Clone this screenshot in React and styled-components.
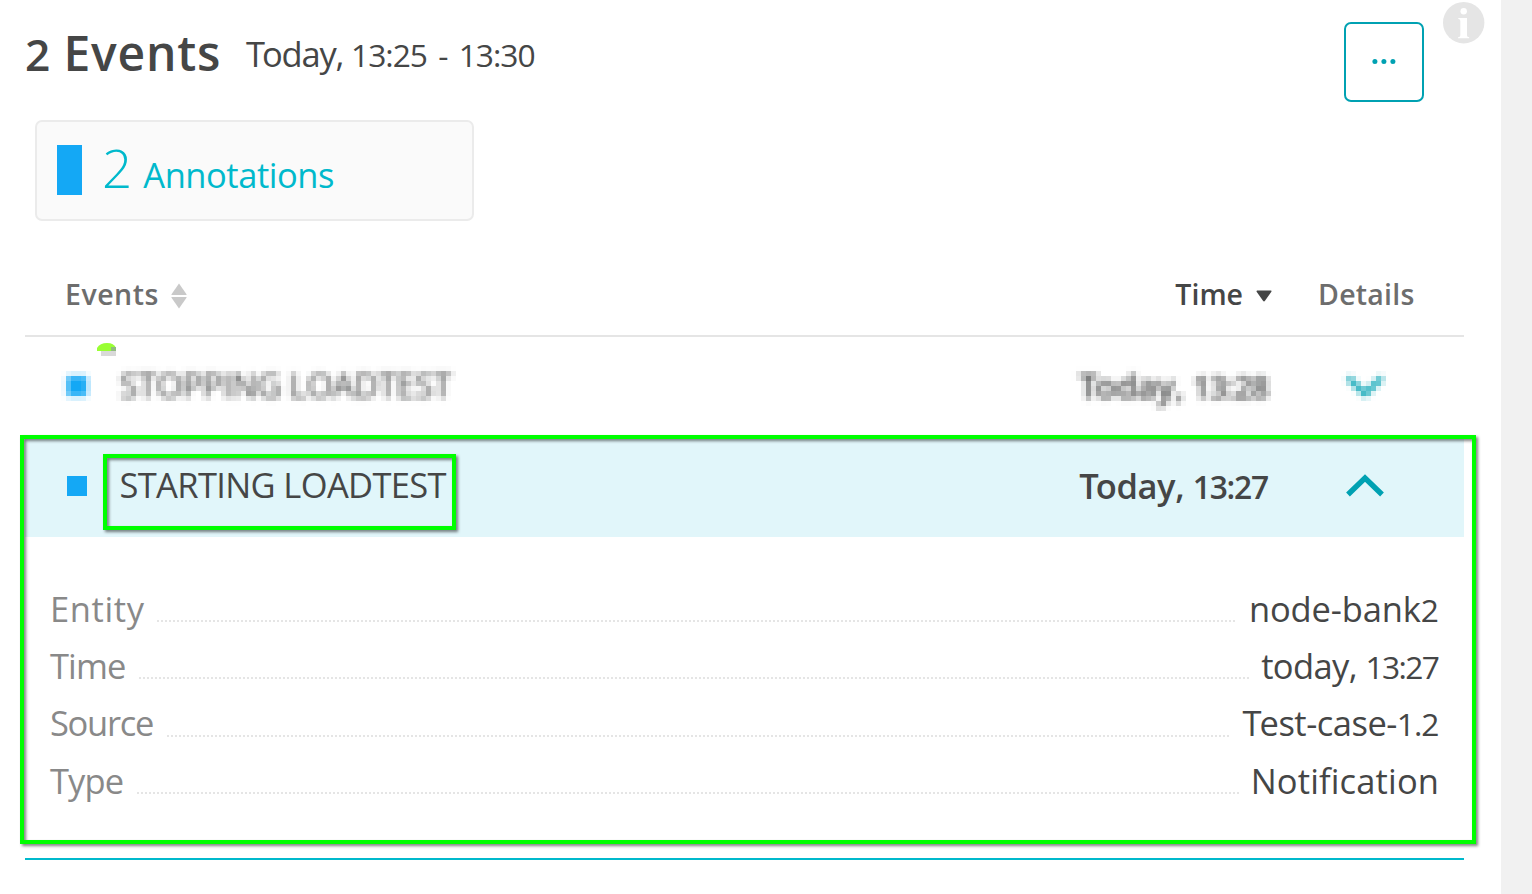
import React from "react";
import styled, { createGlobalStyle } from "styled-components";

const GlobalStyle = createGlobalStyle`
  * { box-sizing: border-box; }
  body { margin: 0; background: #fff; overflow: hidden; }
`;

const Page = styled.div`
  display: flex;
  height: 894px;
  font-family: "Open Sans", "Noto Sans", sans-serif;
  color: #454646;
  white-space: nowrap;
`;

const Panel = styled.main`
  position: relative;
  width: 1501px;
  padding: 18px 37px 0 25px;
  background: #fff;
`;

const Gutter = styled.aside`
  flex: 1;
  background: #f1f1f1;
`;

const Header = styled.header`
  display: flex;
  align-items: flex-start;
  height: 102px;
`;

const Title = styled.h1`
  margin: 0;
  width: 221px;
  font-size: 48px;
  font-weight: 600;
  line-height: 69px;
  letter-spacing: 0.8px;
`;

const Text = styled.span`
  font-size: ${(p) => p.$size || 34.5}px;
  font-weight: ${(p) => p.$weight || 400};
  letter-spacing: ${(p) => p.$track || 0}px;
  margin-right: ${(p) => -(p.$track || 0)}px;
`;

/* Figures are set slightly smaller than the capitals. */
const Num = styled.span`
  font-size: 0.92em;
  letter-spacing: ${(p) => p.$track || 0}px;
  word-spacing: 4px;
`;

const Kern = styled.span`
  letter-spacing: ${(p) => p.$by}px;
`;

const Timeframe = styled(Text)`
  flex: 1;
  line-height: 72px;
`;

const MenuButton = styled.button`
  display: grid;
  place-items: center;
  width: 80px;
  height: 80px;
  margin: 4px 40px 0 0;
  padding: 0 1px 1px 0;
  border: 2px solid #00a1b2;
  border-radius: 7px;
  background: #fff;
`;

const InfoBadge = styled.svg`
  position: absolute;
  left: 1443px;
  top: 2px;
`;

const Card = styled.section`
  display: flex;
  align-items: flex-start;
  width: 439px;
  height: 101px;
  margin-left: 10px;
  padding: 23px 20px;
  border: 2px solid #ebebeb;
  border-radius: 7px;
  background: #fafafa;
  color: #00b9cc;
`;

const Bar = styled.i`
  width: 25px;
  height: 50px;
  margin-right: 20px;
  background: #14a8f5;
`;

const CardText = styled.div`
  display: flex;
  align-items: baseline;
  gap: 11px;
  line-height: 45px;
`;

const columns = `
  display: grid;
  grid-template-columns: 1fr auto 146px;
  column-gap: 46px;
`;

const TableHead = styled.div`
  ${columns}
  height: 116px;
  padding: 31px 0 0 40px;
  border-bottom: 2px solid #e5e5e5;
  line-height: 87px;
`;

const HeadCell = styled.div`
  display: flex;
  align-items: center;
  gap: 13px;
  height: 87px;
  color: ${(p) => (p.$active ? "#454646" : "#6d6d6d")};
  ${Text} { padding-bottom: 2px; }
`;

const Row = styled.div`
  ${columns}
  position: relative;
  align-items: center;
  height: 100px;
  padding: 0 0 4px 42px;
  background: ${(p) => (p.$open ? "#e1f6fa" : "transparent")};
  filter: ${(p) => (p.$masked ? "url(#mosaic)" : "none")};
`;

const RowName = styled.div`
  display: flex;
  align-items: center;
  gap: 32.5px;
  line-height: 94px;
  ${Text} { padding-bottom: 2px; }
`;

const RowTime = styled(Text)`
  margin-right: 4px;
  padding-top: 1px;
  line-height: 96px;
`;

const Square = styled.i`
  width: 20px;
  height: 20px;
  background: #14a8f5;
`;

const Chevron = styled.svg`
  margin-left: 28px;
  transform: ${(p) => (p.$down ? "rotate(180deg)" : "none")};
`;

const Remnant = styled.svg`
  position: absolute;
  left: 97px;
  top: 343px;
`;

const Details = styled.dl`
  margin: 0;
  height: 323px;
  padding: 42.6px 25px 0;
  border-bottom: 2px solid #00b9cc;
`;

const Detail = styled.div`
  display: flex;
  height: 57.4px;
  line-height: 57.4px;
`;

const Term = styled.dt`
  color: #898989;
`;

const Value = styled.dd`
  margin: 0;
`;

const Leader = styled.i`
  flex: 1;
  height: 2px;
  margin: 40.4px 12px 0 13px;
  background: repeating-linear-gradient(90deg, #e5e5e5 0 2px, transparent 2px 4px);
`;

const Highlight = styled.div`
  position: absolute;
  left: ${(p) => p.$x}px;
  top: ${(p) => p.$y}px;
  width: ${(p) => p.$w}px;
  height: ${(p) => p.$h}px;
  border: 4px solid #00ff00;
  filter: drop-shadow(2px 2px 1.5px rgba(0, 0, 0, 0.5));
  pointer-events: none;
`;

const details = [
  { term: "Entity", tt: 0.6, value: <>node-bank<Num>2</Num></>, vt: -0.15 },
  { term: "Time", tt: -0.9, value: <>today, <Num $track={-1.6}>13:27</Num></>, vt: -0.6 },
  { term: "Source", tt: -1.3, value: <><Kern $by={-2}>T</Kern>est-case-<Num $track={-1}>1.2</Num></>, vt: -0.5 },
  { term: "Type", tt: -0.9, value: "Notification", vt: 0.15 },
];

const ChevronIcon = ({ down }) => (
  <Chevron $down={down} width="38" height="24" viewBox="0 0 38 24">
    <path d="M2 20.5 19 4 36 20.5" fill="none" stroke="#00a1b2" strokeWidth="5.4" />
  </Chevron>
);

const Mosaic = () => (
  <svg width="0" height="0" style={{ position: "absolute" }}>
    <filter id="mosaic" filterUnits="userSpaceOnUse" x="0" y="0" width="1439" height="100" colorInterpolationFilters="sRGB">
      <feGaussianBlur in="SourceGraphic" stdDeviation="2.5" result="soft" />
      <feFlood x="3" y="6" width="1" height="1" floodColor="#000" result="dot" />
      <feOffset in="dot" dx="0" dy="0" x="1" y="4" width="5" height="5" result="cell" />
      <feTile in="cell" result="grid" />
      <feComposite in="soft" in2="grid" operator="in" />
      <feMorphology operator="dilate" radius="2" />
    </filter>
  </svg>
);

const Day = ({ children, spacing }) => (
  <>
    <Kern $by={-3}>T</Kern>oday, <Num $track={spacing}>{children}</Num>
  </>
);

export default function App() {
  return (
    <Page>
      <GlobalStyle />
      <Mosaic />
      <Panel>
        <Header>
          <Title><Num $track={0}>2</Num> Events</Title>
          <Timeframe $track={-1.2}>
            <Day spacing={-1}>13:25 - 13:30</Day>
          </Timeframe>
          <MenuButton aria-label="More">
            <svg width="24" height="6" viewBox="0 0 24 6" fill="#00a1b2">
              <circle cx="2.9" cy="2.5" r="2.5" />
              <circle cx="11.9" cy="2.5" r="2.5" />
              <circle cx="20.9" cy="2.5" r="2.5" />
            </svg>
          </MenuButton>
        </Header>
        <InfoBadge width="42" height="42" viewBox="0 0 42 42">
          <circle cx="20.7" cy="20.7" r="20.7" fill="#e5e5e5" />
          <circle cx="20.7" cy="9.3" r="3.2" fill="#fff" />
          <path d="M15.3 16H24V33.5Q24 35 26.2 35.2V36.2H15.1V35.2Q17.3 35 17.3 33.5V18.8Q17.3 17.2 15.3 17Z" fill="#fff" />
        </InfoBadge>

        <Card>
          <Bar />
          <CardText>
            <Text $size={53} $weight={300}>2</Text>
            <Text $track={-0.45}>Annotations</Text>
          </CardText>
        </Card>

        <TableHead>
          <HeadCell>
            <Text $size={28.5} $weight={600} $track={0.5}>Events</Text>
            <svg width="16" height="26" viewBox="0 0 16 26" fill="#c9c9c9">
              <path d="M8 .5 15.5 11.2V12H.5V11.2Z" />
              <path d="M8 25.5 15.5 14.8V14H.5V14.8Z" />
            </svg>
          </HeadCell>
          <HeadCell $active>
            <Text $size={28.5} $weight={600}>Time</Text>
            <svg width="16" height="12" viewBox="0 0 16 12" fill="#454646">
              <path d="M1 .5H15Q16 1 15.2 2L9 10.8Q8 12 7 10.8L.8 2Q0 1 1 .5Z" />
            </svg>
          </HeadCell>
          <HeadCell>
            <Text $size={28.5} $weight={600} $track={0.25}>Details</Text>
          </HeadCell>
        </TableHead>

        <Row $masked>
          <RowName>
            <Square />
            <Text $track={-0.7}>STOPPING LOADTEST</Text>
          </RowName>
          <RowTime $weight={600} $track={-0.4}><Day spacing={-1.1}>13:28</Day></RowTime>
          <ChevronIcon down />
        </Row>
        <Remnant width="20" height="13" viewBox="0 0 20 13">
          <path d="M0 8V5Q3 0 10 0T19 5V8Z" fill="#99ff33" />
          <path d="M14 4H19V8H14Z" fill="#8fbc7d" />
          <path d="M4 8H19V13H4Z" fill="#d9d9d9" />
        </Remnant>

        <Row $open>
          <RowName>
            <Square />
            <Text $track={-0.65}>STARTING LOADTEST</Text>
          </RowName>
          <RowTime $weight={600} $track={-0.4}><Day spacing={-1.2}>13:27</Day></RowTime>
          <ChevronIcon />
        </Row>

        <Details>
          {details.map((d) => (
            <Detail key={d.term}>
              <Term><Text $track={d.tt}>{d.term}</Text></Term>
              <Leader />
              <Value><Text $track={d.vt}>{d.value}</Text></Value>
            </Detail>
          ))}
        </Details>

        <Highlight $x={20} $y={435} $w={1456} $h={409} />
        <Highlight $x={103} $y={454} $w={353} $h={76} />
      </Panel>
      <Gutter />
    </Page>
  );
}
